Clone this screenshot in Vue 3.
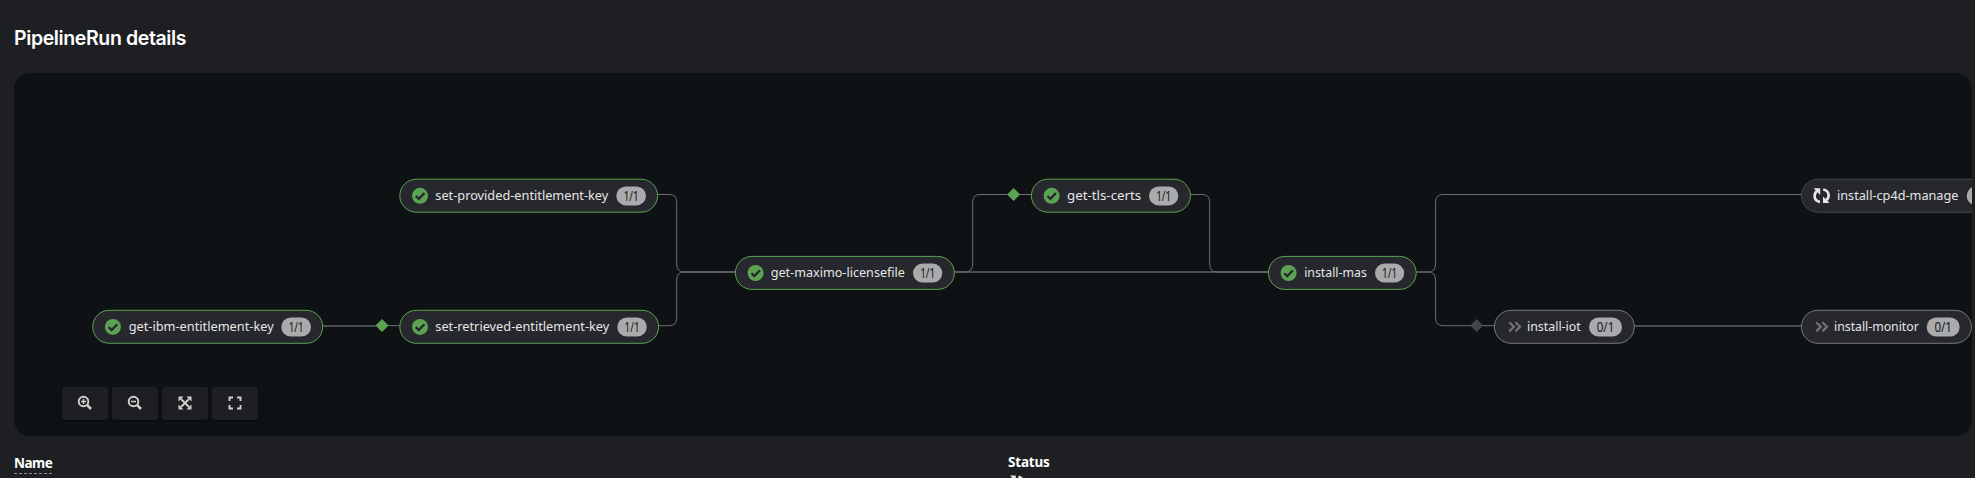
<script setup>
const nodes = [
  { name: 'get-ibm-entitlement-key', x: 92.7, y: 310.3, w: 230, tx: 128.7, tw: 145, bx: 281.3, bw: 29.7, count: '1/1', state: 'done' },
  { name: 'set-provided-entitlement-key', x: 399.8, y: 179.2, w: 257.8, tx: 435.3, tw: 173, bx: 616.3, bw: 29.7, count: '1/1', state: 'done' },
  { name: 'set-retrieved-entitlement-key', x: 399.8, y: 310.3, w: 258.8, tx: 435.3, tw: 174, bx: 617.3, bw: 29.5, count: '1/1', state: 'done' },
  { name: 'get-maximo-licensefile', x: 735.4, y: 256.4, w: 218.9, tx: 770.7, tw: 134.3, bx: 913, bw: 29.3, count: '1/1', state: 'done' },
  { name: 'get-tls-certs', x: 1031.4, y: 179.2, w: 159, tx: 1067, tw: 74.2, bx: 1149, bw: 29.3, count: '1/1', state: 'done' },
  { name: 'install-mas', x: 1268.4, y: 256.4, w: 147.8, tx: 1304.2, tw: 62.6, bx: 1375, bw: 29.2, count: '1/1', state: 'done' },
  { name: 'install-iot', x: 1494.4, y: 310.3, w: 139.9, tx: 1527, tw: 53.8, bx: 1589, bw: 33, count: '0/1', state: 'skipped' },
  { name: 'install-cp4d-manage', x: 1801.4, y: 179.2, w: 210, tx: 1837, tw: 121.4, bx: 1966.7, bw: 33, count: '0/1', state: 'running' },
  { name: 'install-monitor', x: 1801.4, y: 310.3, w: 170, tx: 1834, tw: 84.8, bx: 1926.7, bw: 33, count: '0/1', state: 'skipped' },
]
const straightEdges = [
  'M323 326H376',
  'M954.5 272H1268',
  'M1634.5 326H1801',
]
const sharedEdges = [
  'M684 272H735',
  'M954.5 272H965',
  'M1217 272H1268',
  'M1416.5 272H1428',
]
const edges = [
  'M388 325.6H399.5',
  'M658 194.5H669Q676.7 194.5 676.7 202V264Q676.7 272 684 272',
  'M659 325.7H669Q676.7 325.7 676.7 318V280Q676.7 272 684 272',
  'M965 272Q972.7 272 972.7 264V202Q972.7 194.5 980 194.5H1031',
  'M1190.5 194.5H1202Q1209.7 194.5 1209.7 202V264Q1209.7 272 1217 272',
  'M1428 272Q1435.6 272 1435.6 264V202Q1435.6 194.5 1443 194.5H1801',
  'M1428 272Q1435.6 272 1435.6 280V318Q1435.6 325.7 1443 325.7H1494',
]
const diamonds = [
  { x: 382, y: 325.6, fill: '#5ba352' },
  { x: 1013.6, y: 194.4, fill: '#5ba352' },
  { x: 1476.7, y: 325.6, fill: '#444548' },
]
</script>

<template>
  <main class="page">
    <h2 class="title">PipelineRun details</h2>
    <section class="panel">
      <svg class="graph" viewBox="14 73 1958 363" width="1958" height="363">
        <path v-for="d in straightEdges" :key="d" :d="d" class="edge wide" />
        <path v-for="d in sharedEdges" :key="d" :d="d" class="edge shared" />
        <path v-for="d in edges" :key="d" :d="d" class="edge" />
        <path v-for="m in diamonds" :key="m.x" :d="`M${m.x - 6.5} ${m.y}l6.5 -6.5l6.5 6.5l-6.5 6.5z`" :fill="m.fill" />
        <g v-for="n in nodes" :key="n.name">
          <rect :x="n.x" :y="n.y" :width="n.w" height="33" rx="16.5" class="pill" :class="n.state" />
          <g v-if="n.state === 'done'" :transform="`translate(${n.x + 20.2} ${n.y + 16.6})`">
            <circle r="8" fill="#5ba352" />
            <path d="M-4.2 .2L-1.3 3.1L4.4 -2.7" class="check" />
          </g>
          <g v-else-if="n.state === 'skipped'" :transform="`translate(${n.x + 14} ${n.y + 16.5})`">
            <path d="M.8 -4.6L5.4 0L.8 4.6M7 -4.6L11.6 0L7 4.6" class="chevrons" />
          </g>
          <g v-else :transform="`translate(${n.x + 20.2} ${n.y + 16.5})`">
            <path d="M-1.6 6.2C-8 5 -8.4 -1.4 -4.6 -4.6M1.6 -6.2C8 -5 8.4 1.4 4.6 4.6" class="sync" />
            <path d="M-8 -7.4H-1.4V-.8ZM8 7.4H1.4V.8Z" fill="#e6e6e6" />
          </g>
          <text :x="n.tx" :y="n.y + 20.9" :textLength="n.tw" lengthAdjust="spacingAndGlyphs" class="label">{{ n.name }}</text>
          <rect :x="n.bx" :y="n.y + 7.2" :width="n.bw" height="19" rx="9.5" fill="#a9aaac" />
          <text :x="n.bx + n.bw / 2" :y="n.y + 21.4" :textLength="n.count === '1/1' ? 15 : 17.5" lengthAdjust="spacingAndGlyphs" text-anchor="middle" class="count">{{ n.count }}</text>
        </g>
      </svg>
      <div class="toolbar">
        <button class="tool" aria-label="Zoom in">
          <svg width="16" height="16" viewBox="0 0 16 16"><circle cx="6.5" cy="6.5" r="4.8" /><path d="M10.2 10.2L14 14" class="handle" /><path d="M4 6.5H9M6.5 4V9" class="thin" /></svg>
        </button>
        <button class="tool" aria-label="Zoom out">
          <svg width="16" height="16" viewBox="0 0 16 16"><circle cx="6.5" cy="6.5" r="4.8" /><path d="M10.2 10.2L14 14" class="handle" /><path d="M4 6.5H9" class="thin" /></svg>
        </button>
        <button class="tool" aria-label="Fit to screen">
          <svg width="16" height="16" viewBox="0 0 16 16"><path d="M4 4L12 12M12 4L4 12" /><path class="solid" d="M1.5 1.5H6.5L1.5 6.5ZM14.5 1.5V6.5L9.5 1.5ZM1.5 14.5V9.5L6.5 14.5ZM14.5 14.5H9.5L14.5 9.5Z" /></svg>
        </button>
        <button class="tool" aria-label="Reset view">
          <svg width="16" height="16" viewBox="0 0 16 16"><path d="M2.5 6V2.5H6M10 2.5H13.5V6M13.5 10V13.5H10M6 13.5H2.5V10" /></svg>
        </button>
      </div>
    </section>
    <dl class="details">
      <div class="col"><dt class="term name">Name</dt></div>
      <div class="col">
        <dt class="term">Status</dt>
        <dd class="value">
          <svg width="14" height="14" viewBox="-8 -8 16 16">
            <path d="M-1.6 6.2C-8 5 -8.4 -1.4 -4.6 -4.6M1.6 -6.2C8 -5 8.4 1.4 4.6 4.6" class="sync" />
            <path d="M-8 -7.4H-1.4V-.8ZM8 7.4H1.4V.8Z" fill="#e6e6e6" />
          </svg>
          <span class="state">Running</span>
        </dd>
      </div>
    </dl>
  </main>
</template>

<style>
html, body { margin: 0; background: #1e1f22; overflow: hidden; }
</style>

<style scoped>
.page { width: 1975px; height: 478px; overflow: hidden; background: #1e1f22; color: #fff; font-family: "Noto Sans", sans-serif; box-sizing: border-box; padding: 0 3px 0 14px; }
.title { margin: 0; height: 73px; padding-top: 23px; box-sizing: border-box; font: 600 19.5px/30px Inter, sans-serif; letter-spacing: -.38px; }
.panel { position: relative; height: 363px; border-radius: 16px; background: #0f1214; overflow: hidden; }
.graph { display: block; }
.edge { fill: none; stroke: #6d6f72; stroke-width: 1; }
.wide { stroke: #4a4c4f; stroke-width: 1.8; }
.shared { stroke: #5c5e61; stroke-width: 1.8; }
.pill { fill: #26282d; stroke-width: 1; }
.pill.done { stroke: #5ba352; }
.pill.skipped { stroke: #77797c; }
.pill.running { stroke: #45474a; }
.check { fill: none; stroke: #26282d; stroke-width: 2.3; }
.chevrons { fill: none; stroke: #717275; stroke-width: 2.3; }
.sync { fill: none; stroke: #e6e6e6; stroke-width: 2.6; }
.label { font-family: "Noto Sans", sans-serif; font-size: 13.2px; fill: #e6e6e6; }
.count { font-family: "Noto Sans", sans-serif; font-size: 13.6px; fill: #151515; }
.toolbar { position: absolute; left: 48px; top: 314px; display: flex; gap: 4px; }
.tool { width: 46px; height: 33px; padding: 0 0 1px; border: 0; border-radius: 3px; background: #1e1f22; display: flex; align-items: center; justify-content: center; box-shadow: 0 1px 2px #08090a; }
.tool svg { fill: none; stroke: #d0d0d0; stroke-width: 1.9; }
.tool .thin { stroke-width: 1.4; }
.tool .handle { stroke-width: 2.6; }
.tool .solid { fill: #d0d0d0; stroke: none; }
.details { margin: 0; padding-top: 15px; display: grid; grid-template-columns: 994px 1fr; align-items: start; }
.term { font-size: 13.5px; line-height: 22px; font-weight: 700; width: max-content; letter-spacing: -.2px; }
.name { padding-top: 2px; line-height: 20px; border-bottom: 1px dashed #8a8b8d; letter-spacing: -.5px; }
.value { margin: 0; padding: 0 0 0 2px; font-size: 13.5px; line-height: 18px; display: flex; align-items: center; gap: 6px; }
.state { padding-top: 3px; margin-bottom: -3px; }
</style>
